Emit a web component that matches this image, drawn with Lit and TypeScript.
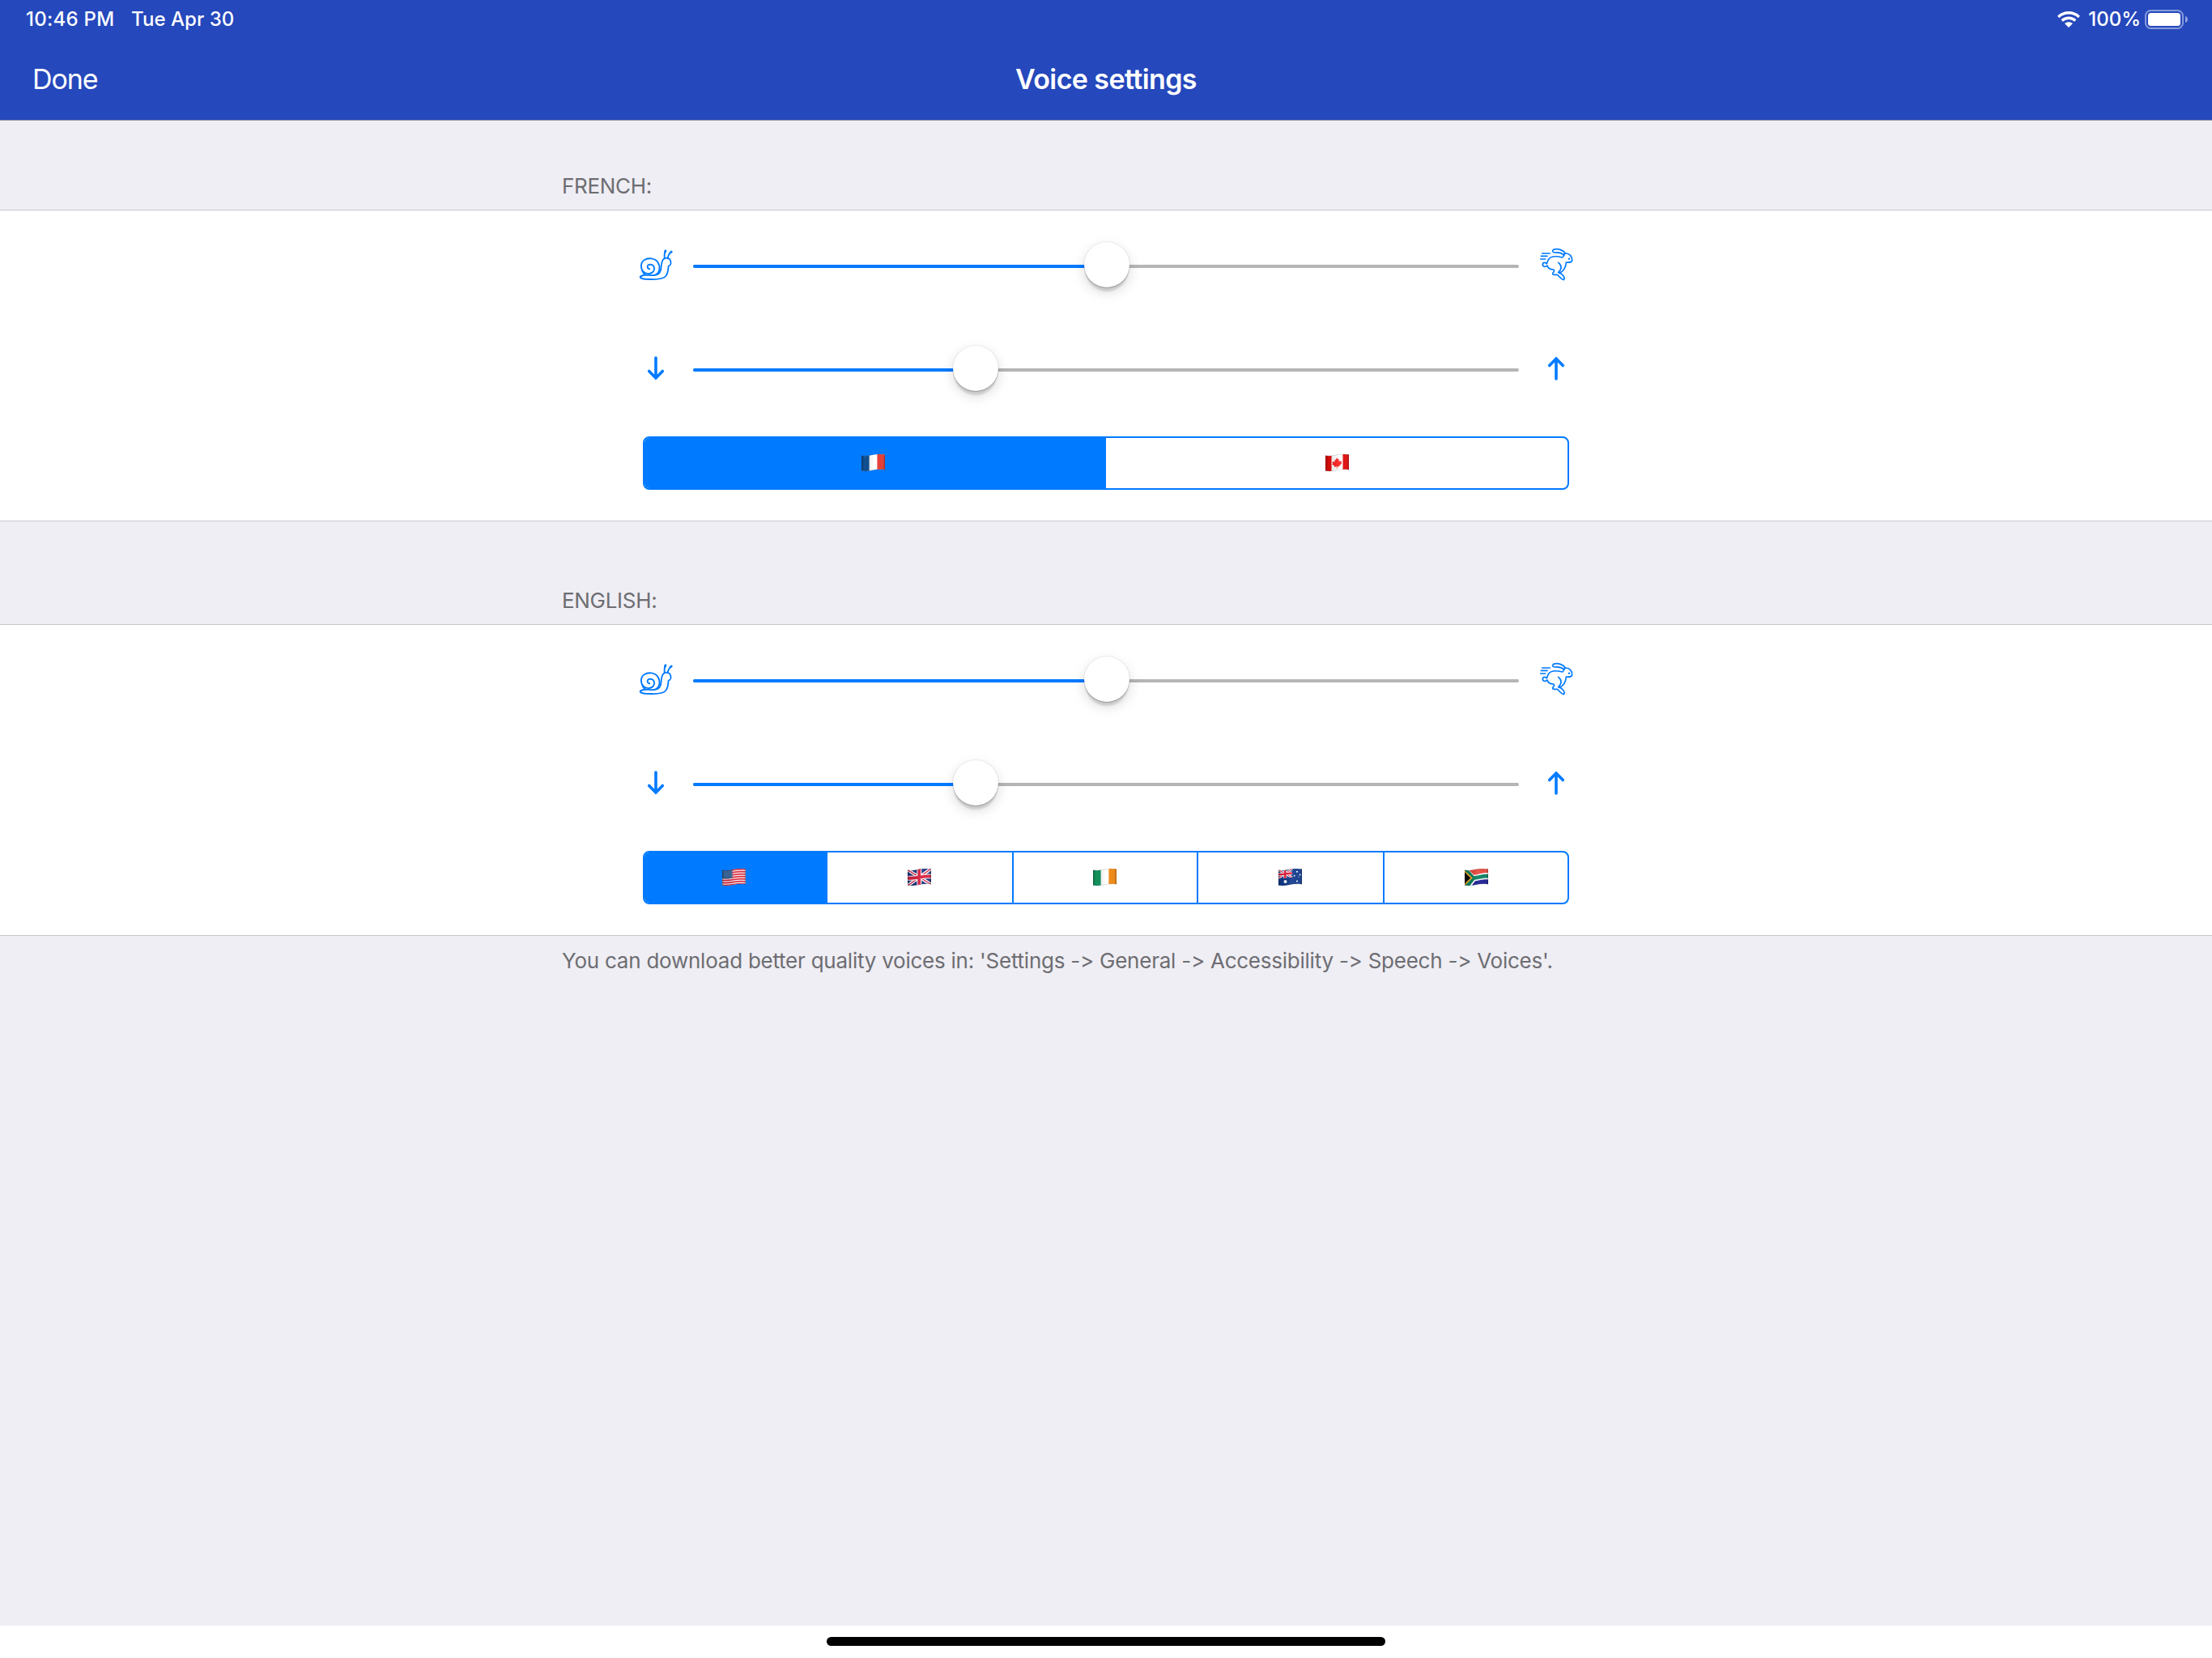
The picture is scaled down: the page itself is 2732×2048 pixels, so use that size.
import { LitElement, html, css, svg } from "lit";
import { customElement, property } from "lit/decorators.js";
import { classMap } from "lit/directives/class-map.js";

const snail = html`<svg width="64" height="64" viewBox="-6 0 192 192" fill="none" stroke="#007aff" stroke-width="5.5" stroke-linecap="round" stroke-linejoin="round">
  <path d="M67 112 C56 110 56 96 69 95 C82 95 88 108 82 119 C74 132 54 132 44 122 C32 110 33 88 47 79 C62 68 88 72 98 88 C108 104 104 126 90 132"/>
  <path d="M40 119 C42 125 46 130 51 133"/>
  <path d="M50 134 C42 136 34 137 32 141 C34 150 52 150 72 150 C96 151 116 150 127 138 C135 128 136 115 137 101 C144 99 147 91 145 83 C142 71 129 68 120 74 C112 79 111 90 110 102 C110 118 104 134 84 135 C72 136 60 134 50 134"/>
  <path d="M122 72 C121 62 121 54 126 44 M134 73 C135 63 139 55 147 49"/>
  <path d="M126 44l-2 5M148 48l-4 3" stroke-width="8"/>
</svg>`;

const rabbit = html`<svg width="64" height="64" viewBox="0 0 192 192" fill="none" stroke="#007aff" stroke-width="5" stroke-linecap="round" stroke-linejoin="round">
  <path d="M44 54H73M40 64H63M38 75H56"/>
  <path d="M130 55 C122 40 102 35 86 40 C80 44 82 50 90 51 C104 49 116 52 126 60"/>
  <path d="M130 54 C146 53 155 65 155 80 C154 88 146 88 133 87 C132 105 125 120 107 127"/>
  <path d="M127 56 C123 61 123 68 119 69 C103 65 78 61 68 76 C63 83 63 89 61 93 C58 86 47 86 46 95 C45 103 56 106 63 99 C66 110 74 114 86 114 C91 118 88 122 84 126 C80 133 88 134 99 133 C108 137 111 150 124 152 C130 147 123 132 108 125"/>
  <path d="M104 88 C117 98 118 111 104 125"/>
  <path d="M144 74h.1" stroke-width="7"/>
</svg>`;

const arrow = (up: boolean) => html`<svg width="64" height="64" viewBox="0 0 64 64" fill="none" stroke="#007aff" stroke-width="3.6" stroke-linecap="round" stroke-linejoin="miter">
  ${up
    ? svg`<path d="M32 45V20M23.700 28.500L32 20L40.300 28.500"/>`
    : svg`<path d="M32 19V44M23.700 35.500L32 44L40.300 35.500"/>`}
</svg>`;

const WAVE = "M0 1.700 C5 2.600 9 2 14 .8 C19 -.3 24 -.1 29 .6 V19.200 C24 18.400 19 18.600 14 19.800 C9 21 5 21.300 0 20.500Z";

const flagArt: Record<string, unknown> = {
  fr: svg`<path fill="#fff" d="M0 0H29V22H0z"/><path fill="#12549c" d="M0 0H9.600V22H0z"/><path fill="#e3372f" d="M19.400 0H29V22H19.400z"/>`,
  ca: svg`<path fill="#fdfdfd" d="M0 0H29V22H0z"/><path fill="#e00a0a" d="M0 0H7.500V22H0zM21.500 0H29V22H21.500z"/>
    <path fill="#fb1f1f" d="M14.300 4.200l1.300 2.300 1.300-.6-.4 3.300 1.600-1.300.4 1 1.700-.3-.7 2.300.8.7-3.200 2.700.2 1.100-2.700-.2.100 2.700h-.8l.1-2.600-3.100.6.300-1.300-3-2 .8-.9-.6-2.100 1.600.1.400-1.100 1.500 1.100-.5-3 1.300.4z"/>`,
  us: svg`<path fill="#f6f1f1" d="M0 0H29V22H0z"/>
    <path fill="none" stroke="#db2237" stroke-width="1.600" d="M0 2.200C9 4 18 -1 29 1M0 5.200C9 7 18 2 29 4M0 8.300C9 10 18 5 29 7M0 11.300C9 13 18 8 29 10M0 14.300C9 16 18 11 29 13M0 17.300C9 19 18 14 29 16M0 20.200C9 22 18 17 29 19"/>
    <path fill="#2d5f98" d="M0 0H12.500V11.500C8 12.500 4 12.700 0 12z"/>
    <path stroke="#8fadca" stroke-width=".8" stroke-dasharray=".8 1.200" d="M1 4H12M2 6H12M1 8H12M2 10H12"/>`,
  gb: svg`<path fill="#1c3481" d="M0 0H29V22H0z"/><path stroke="#fff" stroke-width="4" d="M0 1.500L29 19.500M29 0L0 21"/>
    <path stroke="#d8203f" stroke-width="1.400" d="M0 1.500L29 19.500M29 0L0 21"/>
    <path fill="none" stroke="#fff" stroke-width="5.800" d="M14.300 0V22M0 11.500C9 13 19 8.500 29 9.500"/>
    <path fill="none" stroke="#d8203f" stroke-width="3.800" d="M14.300 0V22M0 11.500C9 13 19 8.500 29 9.500"/>`,
  ie: svg`<path fill="#fff" d="M0 0H29V22H0z"/><path fill="#149a62" d="M0 0H9.600V22H0z"/><path fill="#ee850c" d="M19.400 0H29V22H19.400z"/>`,
  au: svg`<path fill="#123a8c" d="M0 0H29V22H0z"/><path stroke="#fff" stroke-width="2.600" d="M0 1.500L17 11M17 0L0 12"/><path stroke="#e02440" stroke-width="1" d="M0 1.500L17 11M17 0L0 12"/>
    <path fill="none" stroke="#fff" stroke-width="4" d="M8.300 0V12M0 7C6 8 11 5.500 17 5.500"/><path fill="none" stroke="#e8203c" stroke-width="2.400" d="M8.300 0V12M0 7C6 8 11 5.500 17 5.500"/>
    <path fill="#123a8c" d="M0 12.600C6 13 11 11 17 10.700V15H0z"/>
    <g fill="#fff"><circle cx="8.500" cy="16" r="2"/><circle cx="23" cy="3.800" r="1"/><circle cx="19.700" cy="8.700" r=".9"/><circle cx="26.600" cy="7.500" r=".9"/><circle cx="25" cy="10" r=".5"/><circle cx="23" cy="15.500" r="1"/></g>`,
  za: svg`<path fill="#fff" d="M0 0H29V22H0z"/><path fill="#e5483d" d="M3 0H29V5.200C22 4.500 17 7.500 11.500 7.800z"/>
    <path fill="#1a1c90" d="M8 22L13 15.200C18 14.500 23 12.500 29 13.500V22z"/>
    <path fill="#08805f" d="M0 0H3L11.500 9.200C18 8.700 23 6 29 7V11.600C23 11 18 13.500 12 13.800L5.500 22H0z"/>
    <path fill="#f6b02c" d="M0 2L9.800 11.500L0 21z"/><path fill="#0a0a0a" d="M0 4.500L7.300 11.500L0 18.500z"/>`,
};

@customElement("flag-icon")
class FlagIcon extends LitElement {
  @property() code = "";
  static styles = css`
    :host { display: block; width: 29px; height: 22px; }
    svg { display: block; }
  `;
  render() {
    return html`<svg width="29" height="22" viewBox="0 0 29 22">
      <defs>
        <clipPath id="wave"><path d=${WAVE} /></clipPath>
        <linearGradient id="shade">
          <stop offset="0" stop-color="#000" stop-opacity=".3" /><stop offset=".12" stop-color="#000" stop-opacity=".06" />
          <stop offset=".3" stop-color="#000" stop-opacity=".08" /><stop offset=".55" stop-color="#fff" stop-opacity=".08" />
          <stop offset=".85" stop-color="#fff" stop-opacity=".04" /><stop offset="1" stop-color="#000" stop-opacity=".22" />
        </linearGradient>
      </defs>
      <g clip-path="url(#wave)">${flagArt[this.code]}<path fill="url(#shade)" d="M0 0H29V22H0z" /></g>
      <path d=${WAVE} fill="none" stroke="#000" stroke-opacity=".16" stroke-width=".8" />
    </svg>`;
  }
}

@customElement("value-slider")
class ValueSlider extends LitElement {
  @property({ type: Number }) value = 50;
  static styles = css`
    :host { display: block; width: 1020px; height: 64px; }
    .track { position: relative; height: 4px; margin-top: 32px; border-radius: 2px; background: #b5b5b5; }
    .fill { height: 4px; border-radius: 2px; background: #007aff; }
    .thumb {
      position: absolute; top: -28.5px; width: 56px; height: 56px; margin-left: -28px; border-radius: 50%; background: #fff;
      box-shadow: 0 0 0 1px rgba(0, 0, 0, 0.05), 0 1px 1px rgba(0, 0, 0, 0.2), 0 6px 2px -1px rgba(0, 0, 0, 0.12), 0 6px 16px rgba(0, 0, 0, 0.15);
    }
  `;
  render() {
    return html`<div class="track">
      <div class="fill" style="width:${this.value}%"></div>
      <div class="thumb" style="left:${this.value}%"></div>
    </div>`;
  }
}

@customElement("voice-panel")
class VoicePanel extends LitElement {
  @property({ attribute: false }) flags: string[] = [];
  @property({ attribute: false }) widths: number[] = [];
  static styles = css`
    :host { display: block; box-sizing: border-box; height: 385px; padding-top: 35px; background: #fff; border-top: 1px solid #c8c7cc; border-bottom: 1px solid #c8c7cc; }
    .row { display: flex; justify-content: center; gap: 14px; height: 64px; margin-bottom: 64px; }
    svg { display: block; flex: none; }
    .segments { display: grid; box-sizing: border-box; width: 1144px; height: 66px; margin: -12px auto 0; border: 2px solid #007aff; border-radius: 8px; overflow: hidden; }
    .segment { display: flex; align-items: center; justify-content: center; box-sizing: border-box; padding: 0 1px 1px 0; }
    .segment:last-child { padding-right: 0; }
    .segment + .segment { border-left: 2px solid #007aff; }
    .segment.on { padding-right: 5px; background: #007aff; }
    .segment.on + .segment { border-left: 0; }
  `;
  render() {
    return html`
      <div class="row">${snail}<value-slider .value=${50.1}></value-slider>${rabbit}</div>
      <div class="row">${arrow(false)}<value-slider .value=${34.2}></value-slider>${arrow(true)}</div>
      <div class="segments" style="grid-template-columns:${this.widths.map((w) => `${w}px`).join(" ")}">
        ${this.flags.map((f, i) => html`<div class=${classMap({ segment: true, on: i === 0 })}><flag-icon code=${f}></flag-icon></div>`)}
      </div>
    `;
  }
}

@customElement("app-root")
class AppRoot extends LitElement {
  static styles = css`
    :host { display: flex; flex-direction: column; width: 2732px; height: 2048px; overflow: hidden; background: #efeef4; font-family: Inter, "Liberation Sans", sans-serif; font-feature-settings: "calt" 0; color: #6d6d72; }
    .header { box-sizing: border-box; height: 149px; background: #2548bc; border-bottom: 1px solid #8e93a8; color: #fff; }
    .status { display: flex; align-items: center; height: 48px; padding: 0 29px 0 32px; font-size: 24px; font-weight: 450; }
    .time, .date, .percent { padding-bottom: 1px; }
    .time { width: 130px; letter-spacing: 0.25px; }
    .date { letter-spacing: 0.05px; }
    .right { display: flex; align-items: center; margin-left: auto; }
    .percent { margin: 0 5px 0 10px; }
    .nav { display: grid; grid-template-columns: 1fr auto 1fr; align-items: center; height: 98px; padding: 0 40px; font-size: 34px; letter-spacing: -1.1px; }
    .title { font-weight: 600; letter-spacing: -0.6px; }
    .label { box-sizing: border-box; padding-left: 694px; font-size: 26px; line-height: 32px; letter-spacing: -0.3px; }
    .first { height: 110px; padding-top: 65px; }
    .second { height: 127px; padding-top: 82px; }
    .note { padding-top: 15px; letter-spacing: -0.24px; }
    .home { display: flex; justify-content: center; box-sizing: border-box; height: 40px; margin-top: auto; padding-top: 14px; background: #fff; }
    .bar { width: 690px; height: 11px; border-radius: 5.5px; background: #000; }
  `;
  render() {
    return html`
      <div class="header">
        <div class="status">
          <span class="time">10:46 PM</span><span class="date">Tue Apr 30</span>
          <div class="right">
            <svg width="28" height="20" viewBox="0 0 28 20" fill="none" stroke="#fff" stroke-width="3.400">
              <path d="M1.200 6.900C8.500 .1 19.500 .1 26.800 6.900M5.700 11.500C10.400 7.200 17.600 7.200 22.300 11.500" />
              <path fill="#fff" stroke="none" d="M9 15C11.800 12.500 16.200 12.500 19 15L14 20Z" />
            </svg>
            <span class="percent">100%</span>
            <svg width="54" height="24" viewBox="0 0 54 24">
              <rect x="1" y="1" width="46" height="22" rx="6.500" fill="none" stroke="#fff" stroke-opacity=".45" stroke-width="2" />
              <rect x="4" y="4" width="40" height="16" rx="3.500" fill="#fff" />
              <path d="M50 8C54 9 54 15 50 16Z" fill="#fff" fill-opacity=".5" />
            </svg>
          </div>
        </div>
        <div class="nav"><span>Done</span><span class="title">Voice settings</span><span></span></div>
      </div>
      <div class="label first">FRENCH:</div>
      <voice-panel .flags=${["fr", "ca"]} .widths=${[570, 570]}></voice-panel>
      <div class="label second">ENGLISH:</div>
      <voice-panel .flags=${["us", "gb", "ie", "au", "za"]} .widths=${[226, 228, 228, 230, 228]}></voice-panel>
      <div class="label note">You can download better quality voices in: 'Settings -> General -> Accessibility -> Speech -> Voices'.</div>
      <div class="home"><div class="bar"></div></div>
    `;
  }
}
